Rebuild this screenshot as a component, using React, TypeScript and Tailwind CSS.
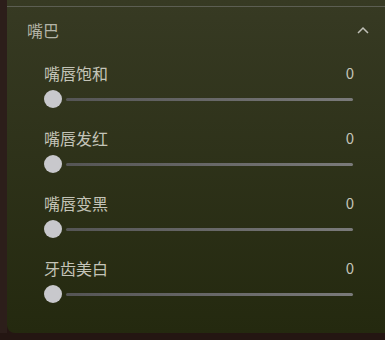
const rows = [
  { label: "嘴唇饱和", value: 0 },
  { label: "嘴唇发红", value: 0 },
  { label: "嘴唇变黑", value: 0 },
  { label: "牙齿美白", value: 0 },
];

function SliderRow({ label, value }: { label: string; value: number }) {
  return (
    <div className="h-[65px] pl-[37px] pr-[32px]">
      <div className="flex items-center justify-between h-[20px]">
        <span className="text-[16px] text-[#c4c4b8]">{label}</span>
        <span className="text-[15px] text-[#c4c4b8] mr-[-1px]">{value}</span>
      </div>
      <div className="flex items-center mt-[7px] h-[18px]">
        <div className="w-[18px] h-[18px] rounded-full bg-[#c8c8cc] shrink-0" />
        <div className="ml-[4px] flex-1 h-[3px] rounded-full bg-gradient-to-r from-[#555555] to-[#7a7a7a]" />
      </div>
    </div>
  );
}

export default function App() {
  return (
    <div
      className="w-[385px] h-[340px] bg-[#241612] flex overflow-hidden"
      style={{ fontFamily: '"Noto Sans CJK SC", "Noto Sans", sans-serif' }}
    >
      <div className="w-[7px] bg-[#2c1e1a] h-[333px] shrink-0" />
      <div className="flex-1 h-[333px] rounded-bl-[8px] bg-gradient-to-b from-[#373a23] to-[#24290f]">
        <div className="mt-[6px] h-px bg-[#5c5e52]" />
        <div className="flex items-center justify-between h-[46px] pl-[20px] pr-[16px]">
          <span className="text-[16px] text-[#b4b4a8]">嘴巴</span>
          <svg width="12" height="8" viewBox="0 0 12 8" fill="none">
            <path d="M1 7 L6 2 L11 7" stroke="#c0c0b8" strokeWidth="1.5" />
          </svg>
        </div>
        <div className="pt-[10px]">
          {rows.map((r) => (
            <SliderRow key={r.label} label={r.label} value={r.value} />
          ))}
        </div>
      </div>
    </div>
  );
}
